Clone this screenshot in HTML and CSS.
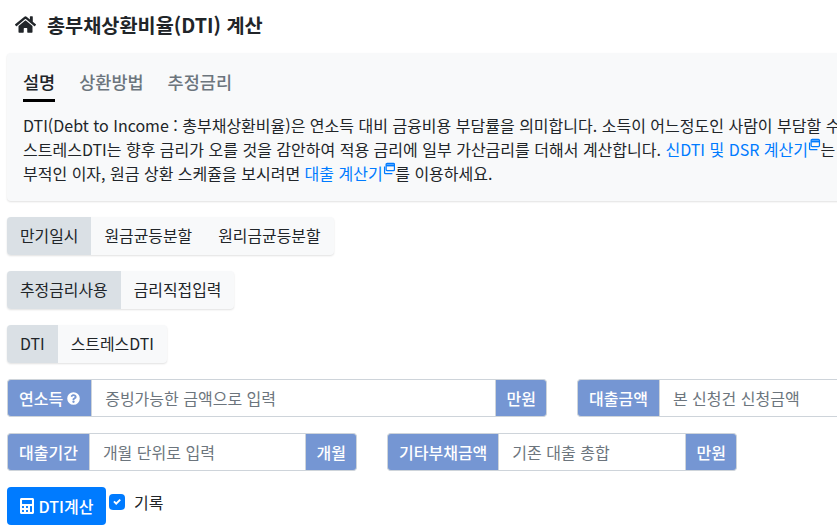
FILE: index.html
```html
<!DOCTYPE html>
<html lang="ko">
<head>
    <meta charset="UTF-8">
    <meta name="viewport" content="width=device-width, initial-scale=1.0">
    <title>총부채상환비율(DTI) 계산</title>
    <link rel="stylesheet" href="styles.css">
</head>
<body>
    <div class="page">
        <!-- 제목 -->
        <h1 class="page-title">
            <svg class="home-icon" viewBox="0 0 576 512"><path d="M280.400 148.300 96 300.100V464a16 16 0 0 0 16 16l112-.3a16 16 0 0 0 15.900-16V368a16 16 0 0 1 16-16h64a16 16 0 0 1 16 16v95.600a16 16 0 0 0 16 16.100l112 .3a16 16 0 0 0 16-16V300L295.700 148.300a12.200 12.200 0 0 0-15.300 0zM571.600 251.500 488 182.600V44a12 12 0 0 0-12-12h-56a12 12 0 0 0-12 12v72.600L318.500 43a48 48 0 0 0-61 0L4.300 251.500a12 12 0 0 0-1.600 16.900l25.500 31A12 12 0 0 0 45.200 301l235.200-193.700a12.200 12.200 0 0 1 15.300 0L530.900 301a12 12 0 0 0 16.900-1.600l25.500-31a12 12 0 0 0-1.700-16.900z"/></svg>
            <span>총부채상환비율(DTI) 계산</span>
        </h1>

        <!-- 설명 패널 -->
        <div class="info-panel">
            <ul class="tabs">
                <li class="tab active">설명</li>
                <li class="tab">상환방법</li>
                <li class="tab">추정금리</li>
            </ul>
            <p class="info-text">DTI(Debt to Income : 총부채상환비율)은 연소득 대비 금융비용 부담률을 의미합니다. 소득이 어느정도인 사람이 부담할 수<br>스트레스DTI는 향후 금리가 오를 것을 감안하여 적용 금리에 일부 가산금리를 더해서 계산합니다. <a class="link" href="#">신DTI 및 DSR 계산기<svg class="ext-icon" viewBox="0 0 12 12"><rect x="3" y="1" width="8" height="7" rx="1"/><path d="M3 3h8" class="ext-bar"/><path d="M1.500 4v6a1 1 0 0 0 1 1H9"/></svg></a>는<br>부적인 이자, 원금 상환 스케쥴을 보시려면 <a class="link" href="#">대출 계산기<svg class="ext-icon" viewBox="0 0 12 12"><rect x="3" y="1" width="8" height="7" rx="1"/><path d="M3 3h8" class="ext-bar"/><path d="M1.500 4v6a1 1 0 0 0 1 1H9"/></svg></a>를 이용하세요.</p>
        </div>

        <!-- 옵션 버튼 -->
        <div class="btn-group">
            <button class="seg active">만기일시</button>
            <button class="seg">원금균등분할</button>
            <button class="seg">원리금균등분할</button>
        </div>
        <div class="btn-group">
            <button class="seg active">추정금리사용</button>
            <button class="seg">금리직접입력</button>
        </div>
        <div class="btn-group">
            <button class="seg active">DTI</button>
            <button class="seg">스트레스DTI</button>
        </div>

        <!-- 입력 -->
        <div class="form-row">
            <div class="input-group wide">
                <span class="addon first">연소득<svg class="help-icon" viewBox="0 0 512 512"><path d="M504 256a248 248 0 1 1-496 0 248 248 0 0 1 496 0zM262.700 90c-54.500 0-89.300 23-116.500 63.800-3.500 5.300-2.400 12.400 2.700 16.300l34.700 26.300c5.200 3.900 12.600 3 16.700-2.100 17.900-22.700 30.100-35.800 57.300-35.800 20.400 0 45.700 13.100 45.700 33 0 15-12.400 22.700-32.600 34C247.100 238.500 216 254.900 216 296v4c0 6.600 5.400 12 12 12h56c6.600 0 12-5.400 12-12v-1.300c0-28.500 83.200-29.700 83.200-106.700 0-58-60.200-102-116.500-102zM256 338c-25.400 0-46 20.600-46 46s20.600 46 46 46 46-20.600 46-46-20.600-46-46-46z"/></svg></span>
                <input class="field" placeholder="증빙가능한 금액으로 입력">
                <span class="addon last">만원</span>
            </div>
            <div class="input-group wide">
                <span class="addon first">대출금액</span>
                <input class="field" placeholder="본 신청건 신청금액">
            </div>
        </div>
        <div class="form-row">
            <div class="input-group narrow">
                <span class="addon first">대출기간</span>
                <input class="field" placeholder="개월 단위로 입력">
                <span class="addon last">개월</span>
            </div>
            <div class="input-group narrow">
                <span class="addon first">기타부채금액</span>
                <input class="field" placeholder="기존 대출 총합">
                <span class="addon last">만원</span>
            </div>
        </div>

        <div class="submit-row">
            <button class="calc-btn">
                <svg class="calc-icon" viewBox="0 0 448 512"><path d="M400 0H48C22.400 0 0 22.400 0 48v416c0 25.600 22.400 48 48 48h352c25.600 0 48-22.400 48-48V48c0-25.600-22.400-48-48-48zM128 435c0 6.400-6.400 13-12.800 13H76.800c-6.400 0-12.800-6.600-12.800-13v-38c0-6.400 6.400-13 12.800-13h38.400c6.400 0 12.800 6.600 12.800 13v38zm0-128c0 6.400-6.400 13-12.800 13H76.800c-6.400 0-12.800-6.600-12.800-13v-38c0-6.400 6.400-13 12.800-13h38.400c6.400 0 12.800 6.600 12.800 13v38zm128 128c0 6.400-6.400 13-12.800 13h-38.400c-6.400 0-12.800-6.600-12.800-13v-38c0-6.400 6.400-13 12.800-13h38.400c6.400 0 12.800 6.600 12.800 13v38zm0-128c0 6.400-6.400 13-12.800 13h-38.400c-6.400 0-12.800-6.600-12.800-13v-38c0-6.400 6.400-13 12.800-13h38.400c6.400 0 12.800 6.600 12.800 13v38zm128 128c0 6.400-6.400 13-12.800 13h-38.400c-6.400 0-12.800-6.600-12.800-13V269c0-6.400 6.400-13 12.800-13h38.400c6.400 0 12.800 6.600 12.800 13v166zm0-256c0 6.400-6.400 13-12.800 13H76.800c-6.400 0-12.800-6.600-12.800-13V77c0-6.400 6.400-13 12.800-13h294.400c6.400 0 12.800 6.600 12.800 13v102z"/></svg>
                DTI계산
            </button>
            <label class="check">
                <span class="check-box"><svg viewBox="0 0 8 8"><path d="M6.600.9 7.900 2.200 3.200 6.900.3 4 1.600 2.700 3.200 4.300z"/></svg></span>
                <span>기록</span>
            </label>
        </div>
    </div>
</body>
</html>
```

FILE: styles.css
```css
/* 기본 */
html, body {
    margin: 0;
    padding: 0;
    overflow: hidden;
    background: #fff;
}
body {
    color: #212529;
    font-family: "Noto Sans CJK KR", "Noto Sans", sans-serif;
    font-size: 16px;
    line-height: 24px;
}
.page {
    width: 1200px;
    padding: 0 7px;
}

/* 제목 */
.page-title {
    display: flex;
    align-items: center;
    height: 49px;
    margin: 0;
    padding: 0 0 4px 8px;
    font-size: 19.700px;
    font-weight: 700;
    color: #212529;
}
.home-icon {
    width: 21px;
    height: 19px;
    margin-right: 11px;
    fill: #212529;
}

/* 설명 패널 */
.info-panel {
    width: 1000px;
    height: 148px;
    box-sizing: border-box;
    padding: 12px 16px 0;
    margin-bottom: 16px;
    background: #f8f9fa;
    border-radius: 4px;
    box-shadow: 0 1px 2px rgba(0, 0, 0, 0.12);
}
.tabs {
    display: flex;
    gap: 24px;
    margin: 0 0 11px;
    padding: 0;
    list-style: none;
}
.tab {
    height: 37px;
    box-sizing: border-box;
    padding-top: 5px;
    font-size: 17.500px;
    font-weight: 500;
    color: #6c757d;
}
.tab.active {
    color: #212529;
    border-bottom: 3px solid #000;
}
.info-text {
    margin: 0;
    white-space: nowrap;
}
.link {
    color: #007bff;
    text-decoration: none;
}
.ext-icon {
    width: 12.500px;
    height: 13px;
    margin-top: -4px;
    vertical-align: 5px;
    fill: none;
    stroke: #007bff;
    stroke-width: 1.200;
}
.ext-bar {
    stroke-width: 2;
}

/* 옵션 버튼 */
.btn-group {
    display: flex;
    width: max-content;
    margin-bottom: 16px;
    background: #f8f9fa;
    border-radius: 4px;
    box-shadow: 0 1px 2px rgba(0, 0, 0, 0.12);
}
.seg {
    height: 38px;
    padding: 0 13px;
    border: 0;
    background: transparent;
    color: #212529;
    font: inherit;
    font-size: 15.900px;
}
.seg.active {
    background: #dae0e5;
    border-radius: 4px 0 0 4px;
}

/* 입력 */
.form-row {
    display: flex;
    gap: 30px;
    margin-bottom: 16px;
}
.input-group {
    display: flex;
    height: 38px;
}
.wide {
    width: 540px;
}
.narrow {
    width: 350px;
}
.addon {
    display: flex;
    align-items: center;
    background: #7596d3;
    border: 1px solid #ced4da;
    color: #fff;
    font-weight: 500;
    white-space: nowrap;
}
.addon.first {
    padding: 0 11px;
    border-radius: 4px 0 0 4px;
    border-right: 0;
}
.addon.last {
    padding: 0 10px 0 11px;
    border-radius: 0 4px 4px 0;
    border-left: 0;
}
.help-icon {
    width: 13px;
    height: 13px;
    margin-left: 4px;
    fill: #fff;
}
.field {
    flex: 1;
    min-width: 0;
    box-sizing: border-box;
    padding: 0 13px;
    border: 1px solid #ced4da;
    border-radius: 0;
    color: #495057;
    font: inherit;
}
.field::placeholder {
    color: #6c757d;
    opacity: 1;
}

/* 계산 버튼 */
.submit-row {
    display: flex;
    align-items: flex-start;
}
.calc-btn {
    display: flex;
    align-items: center;
    justify-content: center;
    gap: 5px;
    width: 99px;
    height: 38px;
    padding: 0;
    border: 0;
    border-radius: 4px;
    background: #007bff;
    color: #fff;
    font: inherit;
    font-weight: 500;
}
.calc-icon {
    width: 14px;
    height: 16px;
    fill: #fff;
}
.check {
    display: flex;
    align-items: center;
    gap: 9px;
    height: 30px;
    margin-left: 3px;
}
.check-box {
    display: flex;
    align-items: center;
    justify-content: center;
    width: 16px;
    height: 16px;
    border-radius: 4px;
    background: #007bff;
}
.check-box svg {
    width: 8px;
    height: 8px;
    fill: #fff;
}
```
